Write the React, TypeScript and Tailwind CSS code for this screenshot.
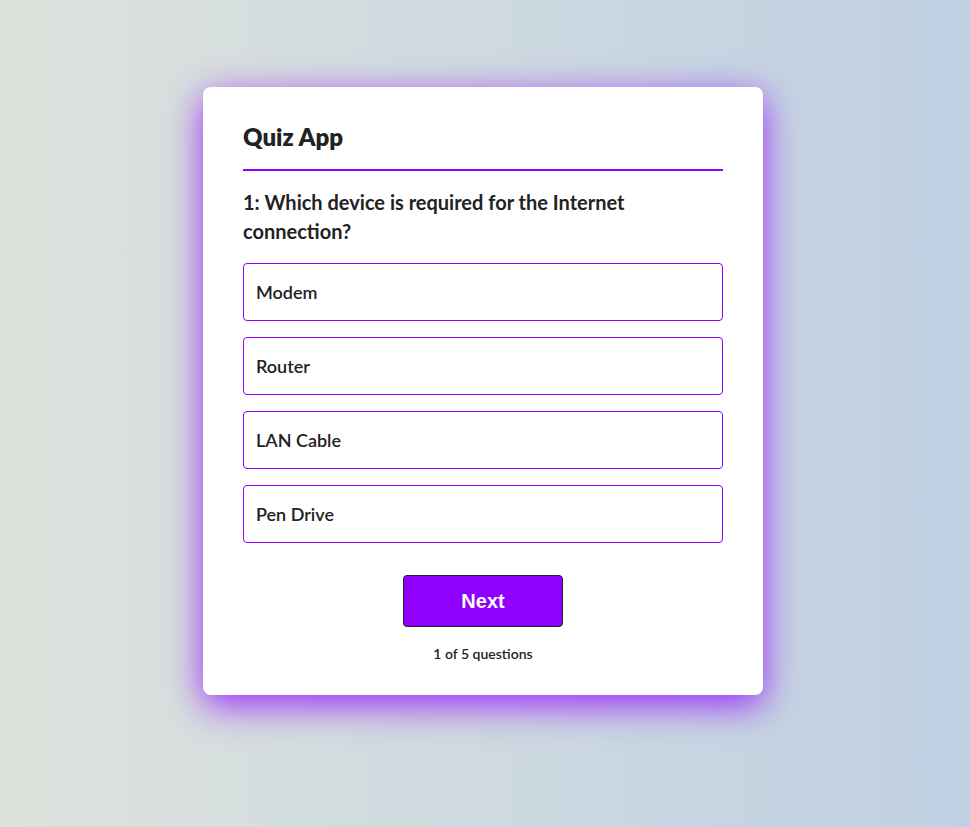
import React from 'react';

const options = ['Modem', 'Router', 'LAN Cable', 'Pen Drive'];

const App = () => {
  return (
    <div
      className="min-h-screen w-full flex justify-center pt-[87px] bg-gradient-to-r from-[#dde2dc] to-[#bfd0e3]"
      style={{ fontFamily: 'Lato, "Noto Sans", sans-serif' }}
    >
      <div className="w-[560px] h-[608px] mr-[4px] bg-white rounded-lg px-10 pt-[30px] pb-[31px] shadow-[0_10px_36px_rgba(143,0,255,0.8)]">
        <h1 className="text-[24px] leading-[40px] font-extrabold text-[#222] pb-3 border-b-2 border-[#8f00ff]">
          Quiz App
        </h1>
        <h2 className="mt-[17px] text-[20px] leading-[29px] font-bold text-[#222]">
          1: Which device is required for the Internet connection?
        </h2>
        <ul className="mt-[17px] flex flex-col gap-4">
          {options.map((opt) => (
            <li
              key={opt}
              className="h-[58px] flex items-center pl-3 border border-[#8f00ff] rounded text-[18px] font-semibold text-[#222]"
            >
              {opt}
            </li>
          ))}
        </ul>
        <div className="mt-8 flex justify-center">
          <button
            className="w-[160px] h-[52px] bg-[#8f00ff] border border-[#222] rounded text-white text-[20px] font-bold"
            style={{ fontFamily: '"Liberation Sans", Arial, sans-serif' }}
          >
            Next
          </button>
        </div>
        <p className="mt-[17px] text-center text-[14px] leading-5 font-semibold text-[#222]">
          1 of 5 questions
        </p>
      </div>
    </div>
  );
};

export default App;
